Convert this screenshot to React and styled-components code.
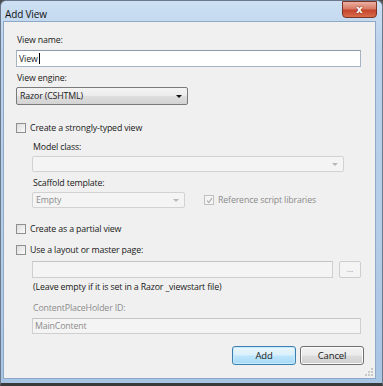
import React from 'react';
import styled, { createGlobalStyle } from 'styled-components';

const GlobalStyle = createGlobalStyle`
    html, body {
        margin: 0;
        padding: 0;
        background: #4d4d4d;
    }
    * { box-sizing: border-box; }
`;

const Window = styled.div`
    width: 383px;
    height: 386px;
    display: flex;
    flex-direction: column;
    border: 1px solid #6a7a8c;
    border-bottom: 3px solid #3a3a3a;
    border-radius: 6px 6px 0 0;
    background: linear-gradient(180deg, #cde0f3 0%, #bad2eb 12%, #b4cde8 60%, #a9c5e4 100%);
    font-family: "Open Sans", "Noto Sans", sans-serif;
    font-size: 8.8px;
    letter-spacing: -0.15px;
    color: #1a1a1a;
`;

const TitleBar = styled.div`
    height: 20px;
    display: flex;
    justify-content: space-between;
    align-items: flex-start;
    padding-left: 4px;
`;

const Title = styled.span`
    margin-top: 7px;
    font-size: 10px;
    line-height: 12px;
    color: #111;
`;

const CloseButton = styled.div`
    width: 35px;
    height: 17px;
    margin-right: 5px;
    margin-top: 0;
    display: flex;
    align-items: center;
    justify-content: center;
    border: 1px solid #7a3325;
    border-radius: 0 0 4px 4px;
    background: linear-gradient(180deg, #eab1a3 0%, #d87a64 45%, #c4452c 55%, #d96c4d 100%);
    color: #fff;
    font-family: "DejaVu Sans", sans-serif;
    font-weight: bold;
    font-size: 10px;
    text-shadow: 0 0 2px #6e2b1e;
`;

const Client = styled.div`
    flex: 1;
    margin: 0 6px 4px 2px;
    border: 1px solid #8ea9c8;
    background: #f0f0f0;
    padding: 12px 11px 0 12px;
    display: flex;
    flex-direction: column;
    position: relative;
`;

const Label = styled.div`
    line-height: 12px;
    height: 12px;
    margin-top: ${p => p.$mt || 0}px;
    margin-left: ${p => (p.$indent ? 17 : 1)}px;
    color: ${p => (p.$disabled ? '#8c8c8c' : '#1a1a1a')};
    white-space: nowrap;
`;

const TextBox = styled.div`
    width: ${p => p.$w}px;
    height: ${p => p.$h || 17}px;
    margin-top: ${p => p.$mt || 0}px;
    margin-left: ${p => (p.$indent ? 16 : 0)}px;
    border: 1px solid ${p => (p.$disabled ? '#cfcfcf' : '#a6b3c2')};
    border-top-color: ${p => (p.$disabled ? '#c4c4c4' : '#8c9aab')};
    background: ${p => (p.$disabled ? '#f4f4f4' : '#fff')};
    color: ${p => (p.$disabled ? '#8c8c8c' : '#1a1a1a')};
    display: flex;
    align-items: center;
    padding-left: 2px;
    line-height: 12px;
`;

const Caret = styled.span`
    display: inline-block;
    width: 1px;
    height: 11px;
    background: #000;
    margin-left: 1px;
`;

const Select = styled.div`
    width: ${p => p.$w}px;
    height: ${p => p.$h || 18}px;
    margin-top: ${p => p.$mt || 0}px;
    margin-left: ${p => (p.$indent ? 16 : 0)}px;
    display: flex;
    align-items: center;
    justify-content: space-between;
    padding: 0 5px 0 3px;
    border: 1px solid ${p => (p.$disabled ? '#d2d2d2' : '#7a7a7a')};
    border-radius: 2px;
    background: ${p => (p.$disabled
        ? '#f4f4f4'
        : 'linear-gradient(180deg, #f4f4f4 0%, #ececec 48%, #dedede 52%, #d3d3d3 100%)')};
    color: ${p => (p.$disabled ? '#8c8c8c' : '#1a1a1a')};
    flex-shrink: 0;
`;

const Arrow = styled.span`
    width: 0;
    height: 0;
    border-left: 3px solid transparent;
    border-right: 3px solid transparent;
    border-top: 3px solid ${p => (p.$disabled ? '#b8b8b8' : '#111')};
`;

const CheckRow = styled.div`
    display: flex;
    align-items: center;
    height: 13px;
    margin-top: ${p => p.$mt || 0}px;
    margin-left: ${p => p.$ml || 0}px;
    color: ${p => (p.$disabled ? '#8c8c8c' : '#1a1a1a')};
    white-space: nowrap;
`;

const Box = styled.span`
    width: 10px;
    height: 10px;
    margin-right: 4px;
    border: 1px solid ${p => (p.$disabled ? '#c0c0c0' : '#8e8f8f')};
    background: ${p => (p.$disabled ? '#f4f4f4' : 'linear-gradient(135deg, #dcdcdc, #fbfbfb)')};
    display: flex;
    align-items: center;
    justify-content: center;
    flex-shrink: 0;
`;

const Row = styled.div`
    display: flex;
    align-items: center;
    margin-top: ${p => p.$mt || 0}px;
`;

const SmallButton = styled.div`
    width: 22px;
    height: 17px;
    margin-left: 6px;
    border: 1px solid #cdcdcd;
    border-radius: 2px;
    background: #f4f4f4;
    color: #a0a0a0;
    display: flex;
    align-items: flex-end;
    justify-content: center;
    line-height: 12px;
    padding-bottom: 2px;
`;

const ButtonBar = styled.div`
    display: flex;
    justify-content: flex-end;
    gap: 4px;
    margin-top: 12px;
`;

const Button = styled.div`
    width: 64px;
    height: 19px;
    display: flex;
    align-items: center;
    justify-content: center;
    border-radius: 3px;
    border: 1px solid ${p => (p.$primary ? '#3c7fb1' : '#707070')};
    box-shadow: inset 0 0 0 1px ${p => (p.$primary ? '#c7ebfc' : '#fbfbfb')};
    background: ${p => (p.$primary
        ? 'linear-gradient(180deg, #eaf6fd 0%, #d9f0fc 48%, #bee6fd 52%, #a7d9f5 100%)'
        : 'linear-gradient(180deg, #f2f2f2 0%, #ebebeb 48%, #dddddd 52%, #cfcfcf 100%)')};
    font-size: 9.5px;
    color: #1a1a1a;
`;

const Grip = styled.svg`
    position: absolute;
    right: 1px;
    bottom: 1px;
`;

const CheckMark = () => (
    <svg width="7" height="7" viewBox="0 0 7 7">
        <path d="M1 3.5 L2.8 5.5 L6 1" stroke="#a8a8a8" strokeWidth="1.1" fill="none" />
    </svg>
);

const App = () => {
    return (
        <>
            <GlobalStyle />
            <Window>
                <TitleBar>
                    <Title>Add View</Title>
                    <CloseButton>x</CloseButton>
                </TitleBar>
                <Client>
                    <Label>View name:</Label>
                    <TextBox $w={345} $mt={4}>View<Caret /></TextBox>

                    <Label $mt={5}>View engine:</Label>
                    <Select $w={172} $mt={3}>
                        <span>Razor (CSHTML)</span>
                        <Arrow />
                    </Select>

                    <CheckRow $mt={16}><Box />Create a strongly-typed view</CheckRow>

                    <Label $indent $mt={7}>Model class:</Label>
                    <Select $w={312} $h={16} $mt={3} $indent $disabled>
                        <span />
                        <Arrow $disabled />
                    </Select>

                    <Label $indent $mt={5}>Scaffold template:</Label>
                    <Row $mt={3}>
                        <Select $w={153} $h={16} $indent $disabled>
                            <span>Empty</span>
                            <Arrow $disabled />
                        </Select>
                        <CheckRow $ml={19} $disabled>
                            <Box $disabled><CheckMark /></Box>
                            Reference script libraries
                        </CheckRow>
                    </Row>

                    <CheckRow $mt={14}><Box />Create as a partial view</CheckRow>
                    <CheckRow $mt={8}><Box />Use a layout or master page:</CheckRow>

                    <Row $mt={5}>
                        <TextBox $w={301} $indent $disabled />
                        <SmallButton>...</SmallButton>
                    </Row>
                    <Label $indent $mt={3}>(Leave empty if it is set in a Razor _viewstart file)</Label>

                    <Label $indent $disabled $mt={9}>ContentPlaceHolder ID:</Label>
                    <TextBox $w={329} $h={16} $mt={4} $indent $disabled>MainContent</TextBox>

                    <ButtonBar>
                        <Button $primary>Add</Button>
                        <Button>Cancel</Button>
                    </ButtonBar>

                    <Grip width="10" height="10" viewBox="0 0 10 10">
                        <rect x="7" y="7" width="2" height="2" fill="#c8c8c8" />
                        <rect x="4" y="7" width="2" height="2" fill="#c8c8c8" />
                        <rect x="7" y="4" width="2" height="2" fill="#c8c8c8" />
                        <rect x="1" y="7" width="2" height="2" fill="#c8c8c8" />
                        <rect x="4" y="4" width="2" height="2" fill="#c8c8c8" />
                        <rect x="7" y="1" width="2" height="2" fill="#c8c8c8" />
                    </Grip>
                </Client>
            </Window>
        </>
    );
};

export default App;
